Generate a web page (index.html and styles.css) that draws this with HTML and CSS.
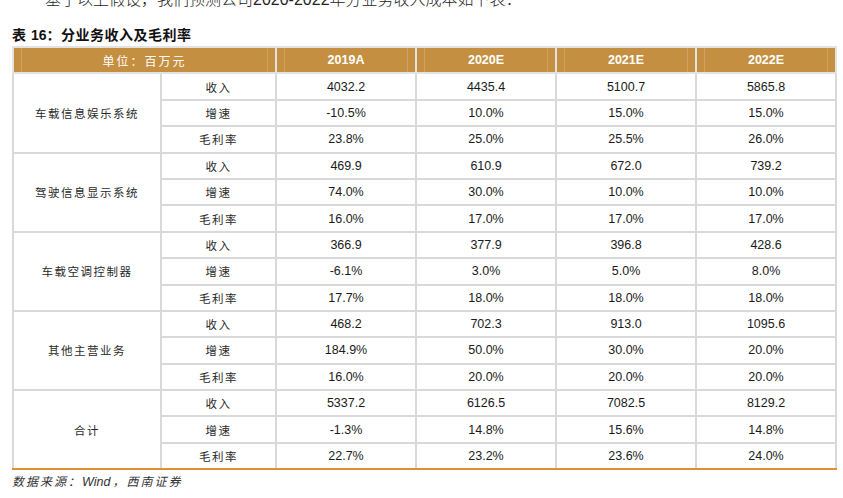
FILE: index.html
```html
<!DOCTYPE html>
<html lang="zh">
<head>
<meta charset="utf-8">
<title>分业务收入及毛利率</title>
<link rel="stylesheet" href="styles.css">
</head>
<body>
<div class="page">
  <p class="intro">基于以上假设，我们预测公司<span class="num">2020-2022</span>年分业务收入成本如下表：</p>
  <h2 class="title">表 <span class="num">16</span>：分业务收入及毛利率</h2>
  <table class="data">
    <colgroup>
      <col class="c-cat"><col class="c-lbl"><col class="c-val"><col class="c-val"><col class="c-val"><col class="c-val">
    </colgroup>
    <thead>
      <tr>
        <th colspan="2" class="unit">单位：百万元</th>
        <th>2019A</th><th>2020E</th><th>2021E</th><th>2022E</th>
      </tr>
    </thead>
    <tbody>
      <tr><td rowspan="3" class="cat">车载信息娱乐系统</td><td class="lbl">收入</td><td>4032.2</td><td>4435.4</td><td>5100.7</td><td>5865.8</td></tr>
      <tr><td class="lbl">增速</td><td>-10.5%</td><td>10.0%</td><td>15.0%</td><td>15.0%</td></tr>
      <tr><td class="lbl">毛利率</td><td>23.8%</td><td>25.0%</td><td>25.5%</td><td>26.0%</td></tr>
      <tr><td rowspan="3" class="cat">驾驶信息显示系统</td><td class="lbl">收入</td><td>469.9</td><td>610.9</td><td>672.0</td><td>739.2</td></tr>
      <tr><td class="lbl">增速</td><td>74.0%</td><td>30.0%</td><td>10.0%</td><td>10.0%</td></tr>
      <tr><td class="lbl">毛利率</td><td>16.0%</td><td>17.0%</td><td>17.0%</td><td>17.0%</td></tr>
      <tr><td rowspan="3" class="cat">车载空调控制器</td><td class="lbl">收入</td><td>366.9</td><td>377.9</td><td>396.8</td><td>428.6</td></tr>
      <tr><td class="lbl">增速</td><td>-6.1%</td><td>3.0%</td><td>5.0%</td><td>8.0%</td></tr>
      <tr><td class="lbl">毛利率</td><td>17.7%</td><td>18.0%</td><td>18.0%</td><td>18.0%</td></tr>
      <tr><td rowspan="3" class="cat">其他主营业务</td><td class="lbl">收入</td><td>468.2</td><td>702.3</td><td>913.0</td><td>1095.6</td></tr>
      <tr><td class="lbl">增速</td><td>184.9%</td><td>50.0%</td><td>30.0%</td><td>20.0%</td></tr>
      <tr><td class="lbl">毛利率</td><td>16.0%</td><td>20.0%</td><td>20.0%</td><td>20.0%</td></tr>
      <tr class="last-group"><td rowspan="3" class="cat">合计</td><td class="lbl">收入</td><td>5337.2</td><td>6126.5</td><td>7082.5</td><td>8129.2</td></tr>
      <tr><td class="lbl">增速</td><td>-1.3%</td><td>14.8%</td><td>15.6%</td><td>14.8%</td></tr>
      <tr class="final"><td class="lbl">毛利率</td><td>22.7%</td><td>23.2%</td><td>23.6%</td><td>24.0%</td></tr>
    </tbody>
  </table>
  <p class="source">数据来源：<span class="num">Wind</span>，西南证券</p>
</div>
</body>
</html>
```

FILE: styles.css
```css
html, body {
  margin: 0;
  padding: 0;
  background: #ffffff;
}

.page {
  padding: 0 0 0 12px;
  font-family: "Noto Sans CJK SC", "Liberation Sans", sans-serif;
  color: #1a1a1a;
}

.num {
  font-family: "Liberation Sans", Arial, sans-serif;
}

.intro {
  margin: -10px 0 0 33px;
  font-size: 16px;
  line-height: 16px;
  color: #222;
  font-family: "Noto Sans CJK SC", sans-serif;
  font-weight: 300;
}

.title {
  margin: 17px 0 0 0;
  font-size: 14px;
  line-height: 20px;
  font-weight: 700;
  color: #111;
  letter-spacing: 0.5px;
  font-family: "Liberation Sans", "Noto Sans CJK SC", sans-serif;
}

.title .num {
  letter-spacing: 0;
}

.data {
  margin-top: 1px;
  border-collapse: collapse;
  table-layout: fixed;
  width: 824px;
  border-bottom: 2px solid #e0902f;
}

.c-cat { width: 148px; }
.c-lbl { width: 115px; }
.c-val { width: 140px; }

.data th,
.data td {
  border: 2px solid #d9d9d9;
  padding: 0;
  text-align: center;
  vertical-align: middle;
  height: 24.4px;
}

.data th {
  background:
    linear-gradient(90deg, transparent 7px, rgba(255,255,255,0.18) 7px, rgba(255,255,255,0.18) 8px, transparent 8px),
    linear-gradient(270deg, transparent 7px, rgba(255,255,255,0.18) 7px, rgba(255,255,255,0.18) 8px, transparent 8px),
    #c48f41;
  color: #ffffff;
  font-family: "Liberation Sans", Arial, sans-serif;
  font-weight: 700;
  font-size: 12.5px;
  border-color: #e2e2e2;
}

.data th.unit {
  font-family: "Noto Sans CJK SC", sans-serif;
  font-weight: 400;
  font-size: 12px;
  letter-spacing: 2px;
}

.data td {
  font-family: "Liberation Sans", Arial, sans-serif;
  font-size: 12.5px;
  color: #1a1a1a;
}

.data td.cat {
  font-family: "Noto Sans CJK SC", sans-serif;
  font-size: 11.5px;
  letter-spacing: 1.5px;
  color: #2a2a2a;
}

.data td.lbl {
  font-family: "Noto Sans CJK SC", sans-serif;
  font-size: 11.5px;
  letter-spacing: 1.5px;
  color: #2a2a2a;
}

.data tr.final td,
.data tr.last-group td.cat {
  border-bottom: 2px solid #e0902f;
}

.source {
  margin: 3px 0 0 0;
  font-size: 12px;
  line-height: 16px;
  font-style: italic;
  color: #333;
  letter-spacing: 2px;
}

.source .num {
  font-size: 12.5px;
  letter-spacing: 0;
  margin-right: 2px;
}
```
